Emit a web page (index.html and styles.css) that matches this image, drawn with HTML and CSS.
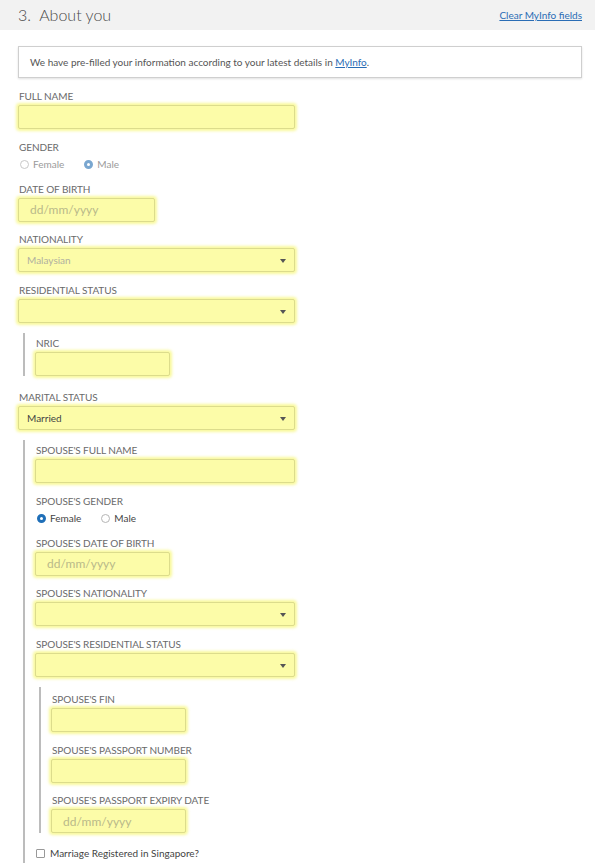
FILE: index.html
```html
<!DOCTYPE html>
<html>
<head>
<meta charset="utf-8">
<link rel="stylesheet" href="styles.css">
</head>
<body>
<div class="header">
  <h2 class="title">3.&nbsp; About you</h2>
  <a class="clear-link" href="#">Clear MyInfo fields</a>
</div>
<div class="content">
  <div class="notice"><span>We have pre-filled your information according to your latest details in <a href="#">MyInfo</a>.</span></div>

  <div class="group">
    <div class="label">FULL NAME</div>
    <div class="field full"></div>
  </div>

  <div class="group">
    <div class="label">GENDER</div>
    <div class="radios disabled">
      <span class="radio"><span class="dot"></span>Female</span>
      <span class="radio on"><span class="dot"></span>Male</span>
    </div>
  </div>

  <div class="group">
    <div class="label">DATE OF BIRTH</div>
    <div class="field short placeholder">dd/mm/yyyy</div>
  </div>

  <div class="group">
    <div class="label">NATIONALITY</div>
    <div class="field full select muted">Malaysian<span class="caret"></span></div>
  </div>

  <div class="group">
    <div class="label">RESIDENTIAL STATUS</div>
    <div class="field full select"><span class="caret"></span></div>
  </div>

  <div class="nested">
    <div class="group">
      <div class="label">NRIC</div>
      <div class="field short"></div>
    </div>
  </div>

  <div class="group">
    <div class="label">MARITAL STATUS</div>
    <div class="field full select dark">Married<span class="caret"></span></div>
  </div>

  <div class="nested outer">
    <div class="group">
      <div class="label">SPOUSE'S FULL NAME</div>
      <div class="field full"></div>
    </div>
    <div class="group">
      <div class="label">SPOUSE'S GENDER</div>
      <div class="radios">
        <span class="radio on"><span class="dot"></span>Female</span>
        <span class="radio"><span class="dot"></span>Male</span>
      </div>
    </div>
    <div class="group">
      <div class="label">SPOUSE'S DATE OF BIRTH</div>
      <div class="field short placeholder">dd/mm/yyyy</div>
    </div>
    <div class="group">
      <div class="label">SPOUSE'S NATIONALITY</div>
      <div class="field full select"><span class="caret"></span></div>
    </div>
    <div class="group">
      <div class="label">SPOUSE'S RESIDENTIAL STATUS</div>
      <div class="field full select"><span class="caret"></span></div>
    </div>
    <div class="nested inner">
      <div class="group">
        <div class="label">SPOUSE'S FIN</div>
        <div class="field short"></div>
      </div>
      <div class="group">
        <div class="label">SPOUSE'S PASSPORT NUMBER</div>
        <div class="field short"></div>
      </div>
      <div class="group">
        <div class="label">SPOUSE'S PASSPORT EXPIRY DATE</div>
        <div class="field short placeholder">dd/mm/yyyy</div>
      </div>
    </div>
    <div class="check-row"><span class="checkbox"></span>Marriage Registered in Singapore?</div>
  </div>
</div>
</body>
</html>
```

FILE: styles.css
```css
* { box-sizing: border-box; }
body {
  margin: 0;
  font-family: Lato, "Open Sans", sans-serif;
  color: #444;
  background: #fff;
}
.header {
  height: 30px;
  background: #f2f2f2;
  display: flex;
  align-items: center;
  justify-content: space-between;
  padding: 0 13px 0 18px;
}
.title {
  margin: 0;
  font-size: 16px;
  font-weight: 300;
  color: #4a4a4a;
  line-height: 30px;
}
.clear-link {
  font-size: 10px;
  color: #2a6db5;
  text-decoration: underline;
}
.content {
  padding: 16px 13px 0 18px;
}
.notice {
  height: 32px;
  border: 1px solid #cfcfcf;
  box-shadow: 0 1px 2px rgba(0,0,0,0.12);
  font-size: 10px;
  color: #555;
  display: flex;
  align-items: center;
  padding-left: 11px;
  margin-bottom: 11px;
}
.notice a { color: #2a6db5; }
.group { margin-bottom: 10.5px; }
.label {
  font-size: 10px;
  line-height: 14px;
  color: #6a6a6a;
  margin-bottom: 2px;
  padding-left: 1px;
  letter-spacing: -0.1px;
}
.field {
  height: 24px;
  background: #fcfca8;
  border: 1px solid #dcdc8c;
  border-radius: 2px;
  box-shadow: 0 0 3px 2px rgba(248,248,130,0.8);
  font-size: 10px;
  display: flex;
  align-items: center;
  padding-left: 8px;
  position: relative;
}
.full { width: 277px; }
.nested .full { width: 260px; }
.short { width: 137px; }
.nested .short { width: 135px; }
.placeholder {
  font-size: 12px;
  color: #b9b98a;
  padding-left: 11px;
}
.muted { color: #b0b0a0; }
.dark { color: #444; }
.caret {
  position: absolute;
  right: 8px;
  top: 10px;
  width: 0;
  height: 0;
  border-left: 3px solid transparent;
  border-right: 3px solid transparent;
  border-top: 4px solid #555;
}
.radios {
  display: flex;
  gap: 20px;
  font-size: 10px;
  line-height: 14px;
  margin-top: 3.5px;
  padding-left: 2px;
  color: #444;
}
.radios.disabled { color: #9a9a9a; }
.radio { display: flex; align-items: center; }
.dot {
  width: 9px;
  height: 9px;
  border-radius: 50%;
  border: 1px solid #b5b5b5;
  background: #fff;
  margin-right: 4px;
}
.radio.on .dot {
  border: 3px solid #1f6fb8;
  background: #fff;
}
.radios.disabled .dot { border-color: #c8c8c8; }
.radios.disabled .radio.on .dot { border-color: #7aa7d0; }
.nested {
  border-left: 2px solid #bcbcbc;
  margin-left: 5px;
  padding-left: 10px;
  padding-top: 3px;
  margin-bottom: 13.5px;
}
.nested .group:last-child { margin-bottom: 0; }
.nested.inner { margin-left: 4px; margin-bottom: 13px; padding-top: 5px; }
.nested.outer { margin-bottom: 0; padding-bottom: 3px; }
.check-row {
  display: flex;
  align-items: center;
  font-size: 10px;
  line-height: 14px;
  color: #444;
}
.checkbox {
  width: 9px;
  height: 9px;
  border: 1px solid #999;
  border-radius: 1px;
  margin: 0 5px 0 1px;
}
```
